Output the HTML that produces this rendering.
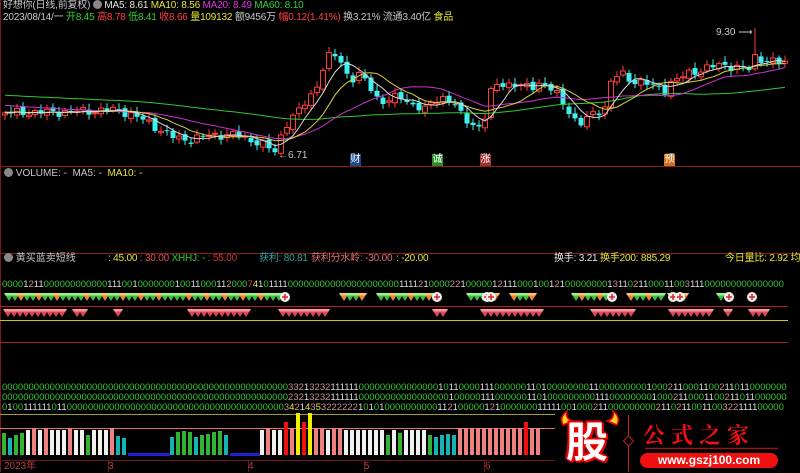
<!DOCTYPE html>
<html><head><meta charset="utf-8">
<style>
*{margin:0;padding:0;box-sizing:border-box}
body{width:800px;height:472px;background:#000;overflow:hidden;position:relative;font-family:"Liberation Sans","Noto Sans CJK SC",sans-serif;font-size:10px;color:#c8c8c8}
.t{position:absolute;white-space:nowrap;line-height:12px}
#svg{position:absolute;left:0;top:0}
.d{position:absolute;left:2px;font-size:9.5px;line-height:10px;white-space:nowrap;font-family:"Liberation Sans",sans-serif}
.ic{display:inline-block;width:9px;height:9px;border-radius:50%;background:#888;vertical-align:-1px}
.h{letter-spacing:-0.2px}
</style></head><body>
<svg id="svg" width="800" height="472" xmlns="http://www.w3.org/2000/svg"></svg>

<div class="t h" style="left:3px;top:0">好想你(日线,前复权) <span class="ic"></span> <span style="color:#e6e6e6">MA5: 8.61</span> <span style="color:#e6e632">MA10: 8.56</span> <span style="color:#e632e6">MA20: 8.49</span> <span style="color:#32d232">MA60: 8.10</span></div>
<div class="t h" style="left:3px;top:12px">2023/08/14/一 <span style="color:#32d232">开8.45</span> <span style="color:#ff4040">高8.78</span> <span style="color:#32d232">低8.41</span> <span style="color:#ff4040">收8.66</span> <span style="color:#e6e632">量109132</span> 额9456万 <span style="color:#ff4040">幅0.12(1.41%)</span> 换3.21% 流通3.40亿 <span style="color:#e6e632">食品</span></div>

<div class="t" style="left:278px;top:150px;color:#c8c8c8">←6.71</div>
<div class="t" style="left:716px;top:27px;color:#c8c8c8">9.30 ⟶</div>
<div class="t" style="left:350px;top:154px;width:11px;height:12px;background:#1e4a8c;color:#fff;font-size:10px;text-align:center">财</div>
<div class="t" style="left:432px;top:154px;width:11px;height:12px;background:#2c8c2c;color:#fff;font-size:10px;text-align:center">诚</div>
<div class="t" style="left:480px;top:154px;width:11px;height:12px;background:#a03030;color:#fff;font-size:10px;text-align:center">涨</div>
<div class="t" style="left:664px;top:154px;width:11px;height:12px;background:#d07020;color:#fff;font-size:10px;text-align:center">预</div>

<div class="t" style="left:4px;top:168px"><span class="ic"></span> VOLUME: -&nbsp; MA5: -&nbsp; <span style="color:#e6e632">MA10: -</span></div>

<div class="t" style="left:4px;top:253px"><span class="ic"></span> 黄买蓝卖短线</div>
<div class="t h" style="left:108px;top:253px"><span style="color:#e6e632">: 45.00</span> <span style="color:#e05050">: 30.00</span> <span style="color:#32c832">XHHJ: -</span> <span style="color:#c83232">: 55.00</span></div>
<div class="t h" style="left:259px;top:253px;color:#32a0a0">获利: 80.81</div>
<div class="t h" style="left:311px;top:253px;color:#e07070">获利分水岭: -30.00</div>
<div class="t h" style="left:396px;top:253px;color:#e6e632">: -20.00</div>
<div class="t h" style="left:554px;top:253px;color:#e6e6e6">换手: 3.21</div>
<div class="t h" style="left:600px;top:253px;color:#e6e632">换手200: 885.29</div>
<div class="t h" style="left:725px;top:253px;color:#e6e632">今日量比: 2.92 均</div>

<div class="d" id="r0" style="top:280px"></div>
<div class="d" id="r1" style="top:383px"></div>
<div class="d" id="r2" style="top:393px"></div>
<div class="d" id="r3" style="top:403px"></div>

<div class="t" style="left:4px;top:461px;color:#b04040;font-size:10px">2023年</div>
<div class="t" style="left:108px;top:461px;color:#b04040;font-size:10px">3</div>
<div class="t" style="left:248px;top:461px;color:#b04040;font-size:10px">4</div>
<div class="t" style="left:364px;top:461px;color:#b04040;font-size:10px">5</div>
<div class="t" style="left:485px;top:461px;color:#b04040;font-size:10px">6</div>

<div class="t" style="left:566px;top:418px;width:50px;height:50px;font-size:42px;line-height:50px;font-weight:bold;color:#fff;text-shadow:2px 0 #e00,-2px 0 #e00,0 2px #e00,0 -2px #e00,2px 2px #e00,-2px -2px #e00">股</div>
<div class="t" style="left:643px;top:422px;font-size:22px;line-height:26px;color:#f01010;font-family:'Noto Serif CJK SC',serif;font-weight:bold;letter-spacing:6px">公式之家</div>
<div class="t" style="left:640px;top:453px;width:138px;height:15px;border-radius:8px;background:#f01010;color:#fff;font-size:12px;line-height:15px;font-weight:bold;text-align:center">www.gszj100.com</div>

<script>
(function(){
var S=document.getElementById('svg'),h='';
function L(x1,y1,x2,y2,c,w){h+='<line x1="'+x1+'" y1="'+y1+'" x2="'+x2+'" y2="'+y2+'" stroke="'+c+'" stroke-width="'+(w||1)+'"/>';}
function R(x,y,w,hh,f,s){h+='<rect x="'+x+'" y="'+y+'" width="'+w+'" height="'+hh+'" fill="'+f+'"'+(s?' stroke="'+s+'"':'')+'/>';}
L(0.5,0,0.5,472,'#801818');
L(0,166.5,800,166.5,'#8c1c1c');
L(0,253.5,800,253.5,'#8c1c1c');
L(0,306.5,788,306.5,'#b02020');
L(0,320.5,788,320.5,'#c8c820');
L(0,342.5,788,342.5,'#a02828');
L(0,414.5,555,414.5,'#a0a020');
L(0,428.5,555,428.5,'#e07070');
L(0,460.5,555,460.5,'#701818');
[108,248,364,484].forEach(function(x){L(x+.5,460,x+.5,472,'#701818');});
h+='<path d="M563 425 q-4 -8 4 -14 q-2 8 6 10 z M617 425 q4 -8 -4 -14 q2 8 -6 10 z" fill="#ffd020" stroke="#e00" stroke-width="1.5"/>';
L(628.5,415,628.5,472,'#c02020');
h+='<path d="M628.5 436 l5 5 -5 5 -5 -5z" fill="#000" stroke="#c02020"/>';
L(645,448.5,778,448.5,'#901818',1.5);
var kp=[[0,113],[60,112],[120,110],[150,123],[160,130],[175,138],[190,140],[210,135],[235,135],[260,143],[275,152],[285,125],[300,110],[315,90],[325,63],[332,53],[340,60],[350,80],[360,75],[370,87],[380,102],[390,100],[400,97],[410,103],[425,110],[435,100],[445,97],[455,105],[462,117],[470,123],[480,127],[487,113],[492,88],[500,83],[515,85],[530,88],[540,82],[555,92],[565,107],[572,113],[578,127],[585,120],[595,113],[605,107],[610,83],[620,73],[630,80],[645,83],[655,87],[665,90],[670,83],[680,78],[690,73],[700,70],[710,67],[725,65],[735,67],[750,70],[755,57],[765,60],[780,63],[792,63]];
function iy(x){for(var i=1;i<kp.length;i++){if(x<=kp[i][0]){var a=kp[i-1],b=kp[i];return a[1]+(b[1]-a[1])*(x-a[0])/(b[0]-a[0]);}}return 63;}
var cl=[],xs=[],i,x;
for(i=0;i<131;i++){x=5+i*6;xs.push(x);cl.push(iy(x)+Math.sin(i*2.3)*3+Math.sin(i*5.1)*2);}
var prev=cl[0]+2;
for(i=0;i<cl.length;i++){var c=cl[i],o=prev+Math.sin(i*3.7)*2;x=xs[i];var tp=Math.min(o,c),bt=Math.max(o,c);if(bt-tp<1)bt=tp+1;
var hi=tp-2-Math.abs(Math.sin(i*1.9))*4,lo=bt+2+Math.abs(Math.cos(i*2.7))*3;
if(i==125){hi=28;}
if(i==46){lo=155;}
var up=c<o;var col=up?'#ff3c3c':'#40f0f0';
L(x,hi.toFixed(1),x,lo.toFixed(1),col);
if(up)R(x-2.5,tp.toFixed(1),5,(bt-tp).toFixed(1),'#000',col);else R(x-2.5,tp.toFixed(1),5,(bt-tp).toFixed(1),col);
prev=c;}
function ma(n,pre){var pts=[];var arr=[];for(var k=0;k<n;k++)arr.push(pre);arr=arr.concat(cl);for(var i=0;i<cl.length;i++){var s=0;for(var j=0;j<n;j++)s+=arr[i+n-j];pts.push(xs[i]+','+(s/n).toFixed(1));}return pts.join(' ');}
h+='<polyline points="'+ma(60,95)+'" fill="none" stroke="#32c832"/>';
h+='<polyline points="'+ma(20,105)+'" fill="none" stroke="#d030d0"/>';
h+='<polyline points="'+ma(10,112)+'" fill="none" stroke="#d8d040"/>';
h+='<polyline points="'+ma(5,113)+'" fill="none" stroke="#d8d8d8"/>';
function tri(x,y,c1,c2){h+='<path d="M'+(x-5)+' '+y+' h10 l-5 8z" fill="'+c1+'"/><path d="M'+(x-5)+' '+y+' h10 l-1.5 2.5 h-7z" fill="'+c2+'"/>';}
function seg(a,b,y,pink){for(var x=a;x<=b;x+=6){var r=Math.sin(x*0.37)>0.55;if(pink)tri(x,y,'#e04858','#ff90a0');else if(r)tri(x,y,'#e88a30','#ffc070');else tri(x,y,'#40c040','#a0f090');}}
[[5,285],[340,368],[377,442],[467,503],[510,538],[572,612],[627,667],[668,693],[717,733]].forEach(function(s){seg(s[0]+4,s[1]-4,293,false);});
[[3,68],[72,88],[113,127],[187,253],[278,335],[432,453],[480,545],[590,637],[668,717],[723,735],[748,770]].forEach(function(s){seg(s[0]+5,s[1]-5,309,true);});
[285,437,487,491,612,673,680,729,752].forEach(function(x){h+='<circle cx="'+x+'" cy="297" r="5" fill="#f0f0f0"/><path d="M'+(x-3)+' 297h6M'+x+' 294v6" stroke="#e02020" stroke-width="1.5"/>';});
var seq='GCGGWPWPWWWPWWGWWWPCC.......CGGGCGGGGC.....WPWWRPYRYPPWPPWWWWWWWGWGWWWWGCCCCPPPPPPPPPPPRPP';
var colr={G:'#32b432',C:'#14b4b4',W:'#f0f0f0',P:'#f08080',R:'#f01010',Y:'#f0f000'};
var tops={G:433,C:436,W:430,P:428,R:422,Y:413};
for(i=0;i<seq.length;i++){var t=seq[i];x=2+i*6;if(t=='.'){R(x,453,3,3,'#2020d0');R(x+3,453,3,3,'#2020d0');continue;}
var ty=tops[t]+(t=='G'||t=='C'?Math.round(Math.sin(i)*2):0);R(x,ty,4,455-ty,colr[t]);}
S.innerHTML=h;
function Z(n){return new Array(n+1).join('0');}
function row(id,s){s=(s+Z(160)).slice(0,150);var o='';for(var k=0;k<s.length;k++){var d=s[k],c='#32c832';if(d=='1')c='#dcdcdc';else if(d=='2'||d=='3')c='#c89090';else if(d=='4'||d=='5')c='#e6e632';else if(d=='7')c='#e04040';o+='<span style="color:'+c+'">'+d+'</span>';}document.getElementById(id).innerHTML=o;}
row('r0','0000121100000000000011100100000001001100011200074101111000000000000000000000111121000022100000121110001001210000000013110211000110031110000');
row('r1',Z(54)+'3321323211111100000000'+'00000001011000011100000011010000000011000000000100021100011002110110');
row('r2',Z(54)+'2321323211111100000000'+'00000000010000011100000011010000000001110000000010002110001100211011');
row('r3','0100111111011'+Z(41)+'3421435322222210101000'+'000000011210000012100000001111100100021100000000021102110011003221111');
})();
</script>
</body></html>
